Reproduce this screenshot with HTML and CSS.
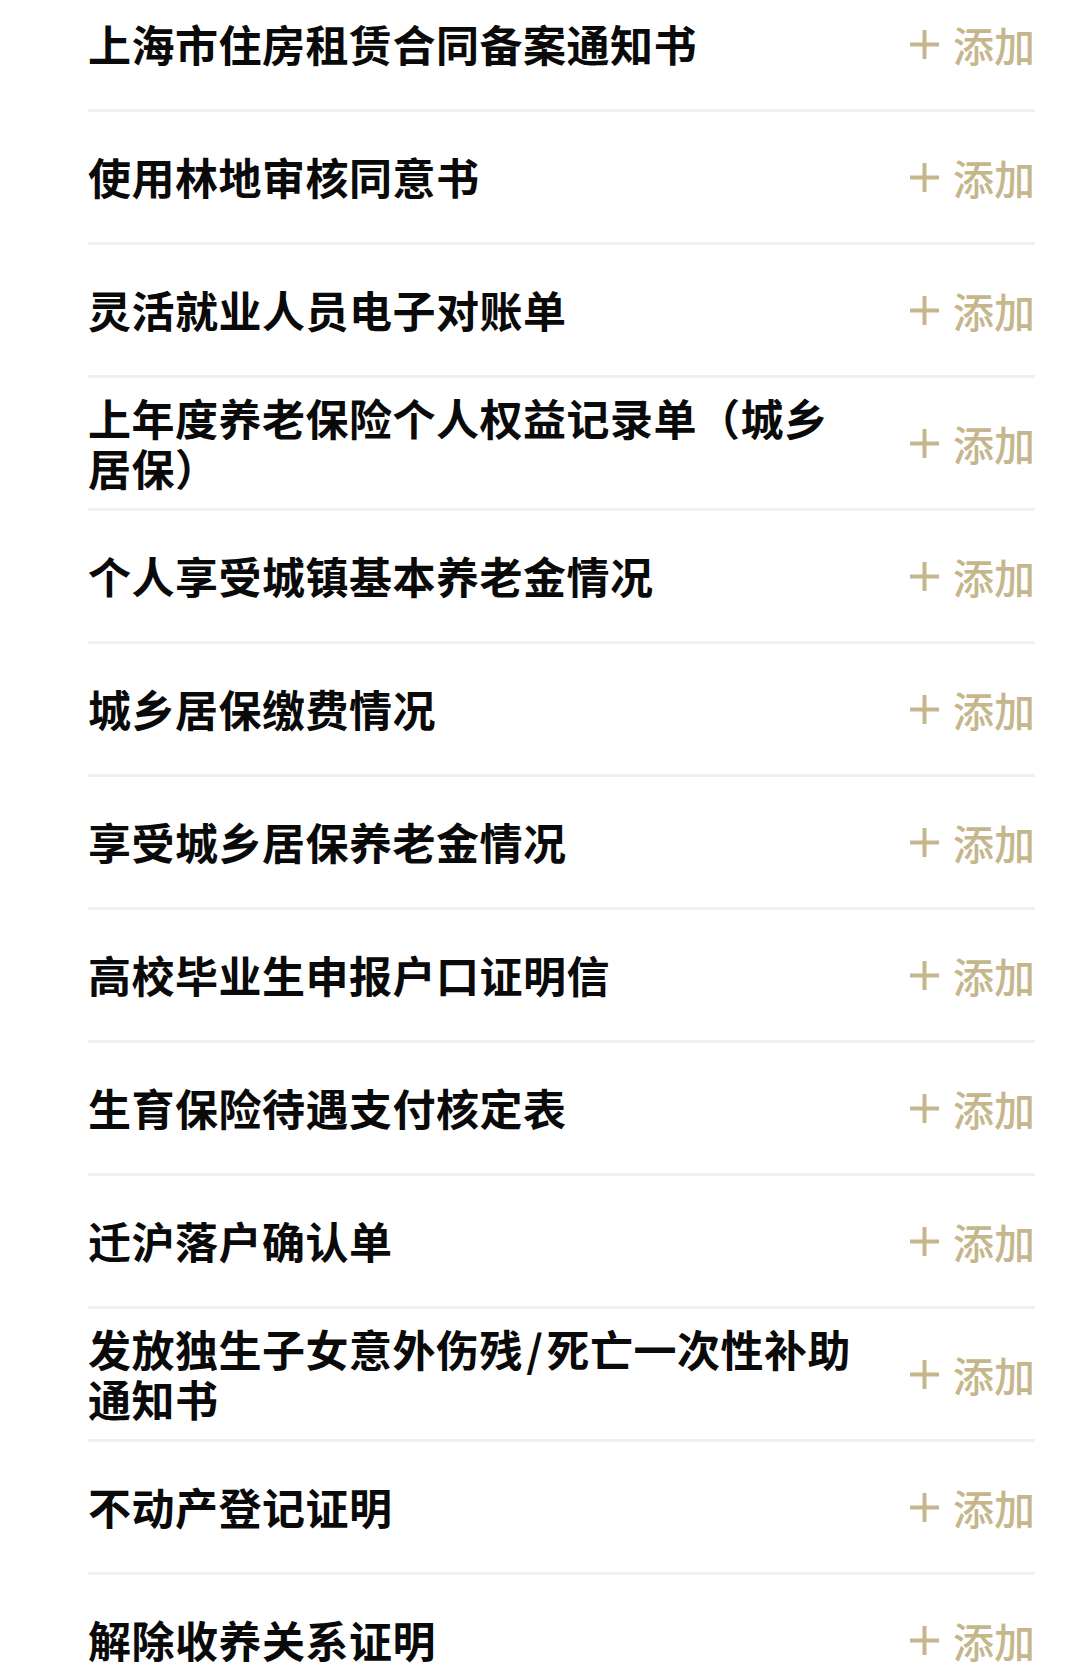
FILE: index.html
```html
<!DOCTYPE html>
<html lang="zh-CN">
<head>
    <meta charset="UTF-8">
    <meta name="viewport" content="width=device-width, initial-scale=1.0">
    <title>材料清单</title>
    <link rel="stylesheet" href="styles.css">
</head>
<body>

    <div class="list">
        <div class="item">
            <div class="name">上海市住房租赁合同备案通知书</div>
            <div class="add"><svg viewBox="0 0 29 29"><path d="M14.5 0v29M0 14.5h29"/></svg>添加</div>
        </div>
        <div class="item">
            <div class="name">使用林地审核同意书</div>
            <div class="add"><svg viewBox="0 0 29 29"><path d="M14.5 0v29M0 14.5h29"/></svg>添加</div>
        </div>
        <div class="item">
            <div class="name">灵活就业人员电子对账单</div>
            <div class="add"><svg viewBox="0 0 29 29"><path d="M14.5 0v29M0 14.5h29"/></svg>添加</div>
        </div>
        <div class="item">
            <div class="name">上年度养老保险个人权益记录单（城乡居保）</div>
            <div class="add"><svg viewBox="0 0 29 29"><path d="M14.5 0v29M0 14.5h29"/></svg>添加</div>
        </div>
        <div class="item">
            <div class="name">个人享受城镇基本养老金情况</div>
            <div class="add"><svg viewBox="0 0 29 29"><path d="M14.5 0v29M0 14.5h29"/></svg>添加</div>
        </div>
        <div class="item">
            <div class="name">城乡居保缴费情况</div>
            <div class="add"><svg viewBox="0 0 29 29"><path d="M14.5 0v29M0 14.5h29"/></svg>添加</div>
        </div>
        <div class="item">
            <div class="name">享受城乡居保养老金情况</div>
            <div class="add"><svg viewBox="0 0 29 29"><path d="M14.5 0v29M0 14.5h29"/></svg>添加</div>
        </div>
        <div class="item">
            <div class="name">高校毕业生申报户口证明信</div>
            <div class="add"><svg viewBox="0 0 29 29"><path d="M14.5 0v29M0 14.5h29"/></svg>添加</div>
        </div>
        <div class="item">
            <div class="name">生育保险待遇支付核定表</div>
            <div class="add"><svg viewBox="0 0 29 29"><path d="M14.5 0v29M0 14.5h29"/></svg>添加</div>
        </div>
        <div class="item">
            <div class="name">迁沪落户确认单</div>
            <div class="add"><svg viewBox="0 0 29 29"><path d="M14.5 0v29M0 14.5h29"/></svg>添加</div>
        </div>
        <div class="item">
            <div class="name">发放独生子女意外伤残&#8202;/&#8202;死亡一次性补助通知书</div>
            <div class="add"><svg viewBox="0 0 29 29"><path d="M14.5 0v29M0 14.5h29"/></svg>添加</div>
        </div>
        <div class="item">
            <div class="name">不动产登记证明</div>
            <div class="add"><svg viewBox="0 0 29 29"><path d="M14.5 0v29M0 14.5h29"/></svg>添加</div>
        </div>
        <div class="item">
            <div class="name">解除收养关系证明</div>
            <div class="add"><svg viewBox="0 0 29 29"><path d="M14.5 0v29M0 14.5h29"/></svg>添加</div>
        </div>
    </div>

</body>
</html>
```

FILE: styles.css
```css
body {
    margin: 0;
    background: #fff;
    font-family: "Noto Sans CJK SC", "Noto Sans", sans-serif;
    overflow: hidden;
}

.list {
    margin-top: -21px;
    padding: 0 45px 0 88px;
}

.item {
    display: flex;
    align-items: center;
    justify-content: space-between;
    min-height: 130px;
    border-bottom: 3px solid #f0f0f0;
}

.name {
    max-width: 780px;
    padding-bottom: 3px;
    font-size: 43px;
    font-weight: 700;
    line-height: 50px;
    letter-spacing: 0.5px;
    color: #0a0a0a;
}

.add {
    display: flex;
    align-items: center;
    font-size: 41px;
    font-weight: 500;
    color: #c6b68c;
    white-space: nowrap;
}

.add svg {
    width: 29px;
    height: 29px;
    margin-right: 14px;
    stroke: #c6b68c;
    stroke-width: 4;
    fill: none;
}
```
